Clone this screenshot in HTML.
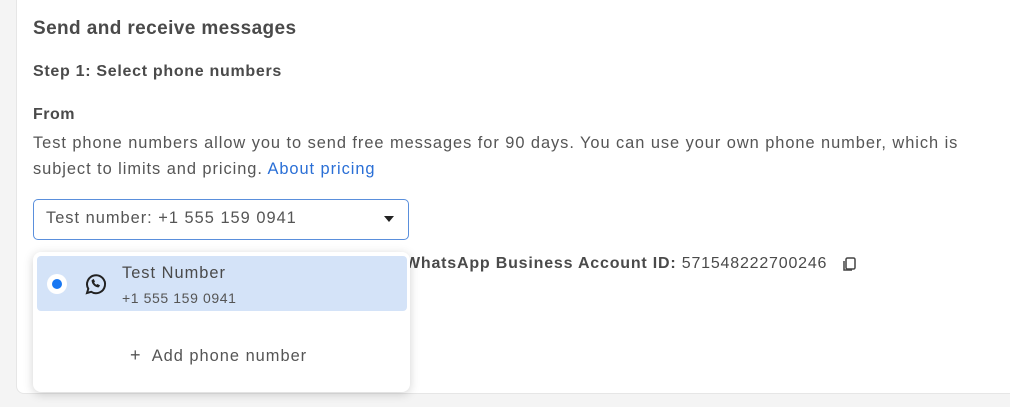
<!DOCTYPE html>
<html><head><style>
body{margin:0;width:1010px;height:407px;background:#f4f4f4;font-family:"Liberation Sans",sans-serif;color:#4b4b4b;position:relative;overflow:hidden}
.card{position:absolute;left:16px;top:-10px;width:1010px;height:402px;background:#fff;border-radius:8px;border:1px solid #e6e6e6;border-right:none}
.a{position:absolute;white-space:nowrap}
</style></head><body>
<div class="card"></div>
<div class="a" style="left:33px;top:18px;font-size:19px;font-weight:bold;color:#4a4a4a;letter-spacing:0.4px">Send and receive messages</div>
<div class="a" style="left:33px;top:63px;font-size:16px;font-weight:bold;color:#4a4a4a;letter-spacing:0.7px">Step 1: Select phone numbers</div>
<div class="a" style="left:33px;top:106px;font-size:16px;font-weight:bold;color:#4a4a4a;letter-spacing:0.5px">From</div>
<div class="a" style="left:33px;top:130px;font-size:16.4px;line-height:26px;color:#555;letter-spacing:0.95px">Test phone numbers allow you to send free messages for 90 days. You can use your own phone number, which is<br>subject to limits and pricing. <span style="color:#2a6fd6">About pricing</span></div>
<div class="a" style="left:33px;top:199px;width:374px;height:39px;border:1.5px solid #5a8fdc;border-radius:5px;background:#fff"></div>
<div class="a" style="left:46px;top:209px;font-size:16.4px;color:#555;letter-spacing:1px">Test number: +1 555 159 0941</div>
<div class="a" style="left:384px;top:216px;width:0;height:0;border-left:5px solid transparent;border-right:5px solid transparent;border-top:6px solid #222"></div>
<div class="a" style="left:405px;top:255px;font-size:16px;color:#4a4a4a;letter-spacing:0.8px"><b>WhatsApp Business Account ID:</b> 571548222700246</div>
<svg class="a" style="left:841px;top:255px" width="18" height="18" viewBox="0 0 18 18" fill="none" stroke="#444" stroke-width="1.5"><rect x="5" y="3" width="9" height="11" rx="1.5"/><path d="M3 6v9h8"/></svg>
<div class="a" style="left:33px;top:252px;width:377px;height:140px;background:#fff;border-radius:8px;box-shadow:0 2px 10px rgba(0,0,0,.18)"></div>
<div class="a" style="left:37px;top:256px;width:370px;height:55px;background:#d4e3f8;border-radius:4px"></div>
<div class="a" style="left:47px;top:274px;width:20px;height:20px;border-radius:50%;background:#fff"></div>
<div class="a" style="left:52px;top:279px;width:10px;height:10px;border-radius:50%;background:#1877f2"></div>
<svg class="a" style="left:83px;top:272px" width="24" height="24" viewBox="0 0 24 24" fill="none" stroke="#222" stroke-width="2"><path d="M4 21l1.3-4.2A9 9 0 1 1 8.2 19.8z"/><path d="M9 8.5c0 3 3 6.5 6.5 6.5l1-1.5-2-1-1 .8c-1.3-.6-2.3-1.6-2.8-2.8l.8-1-1-2z" fill="#222" stroke-width="0.8"/></svg>
<div class="a" style="left:122px;top:264px;font-size:16.4px;color:#4a4a4a;letter-spacing:1px">Test Number</div>
<div class="a" style="left:122px;top:290px;font-size:14px;color:#555;letter-spacing:0.6px">+1 555 159 0941</div>
<div class="a" style="left:130px;top:345px;font-size:16.4px;color:#555;letter-spacing:1px"><span style="font-weight:300;font-size:18px">+</span>&nbsp; Add phone number</div>
</body></html>
